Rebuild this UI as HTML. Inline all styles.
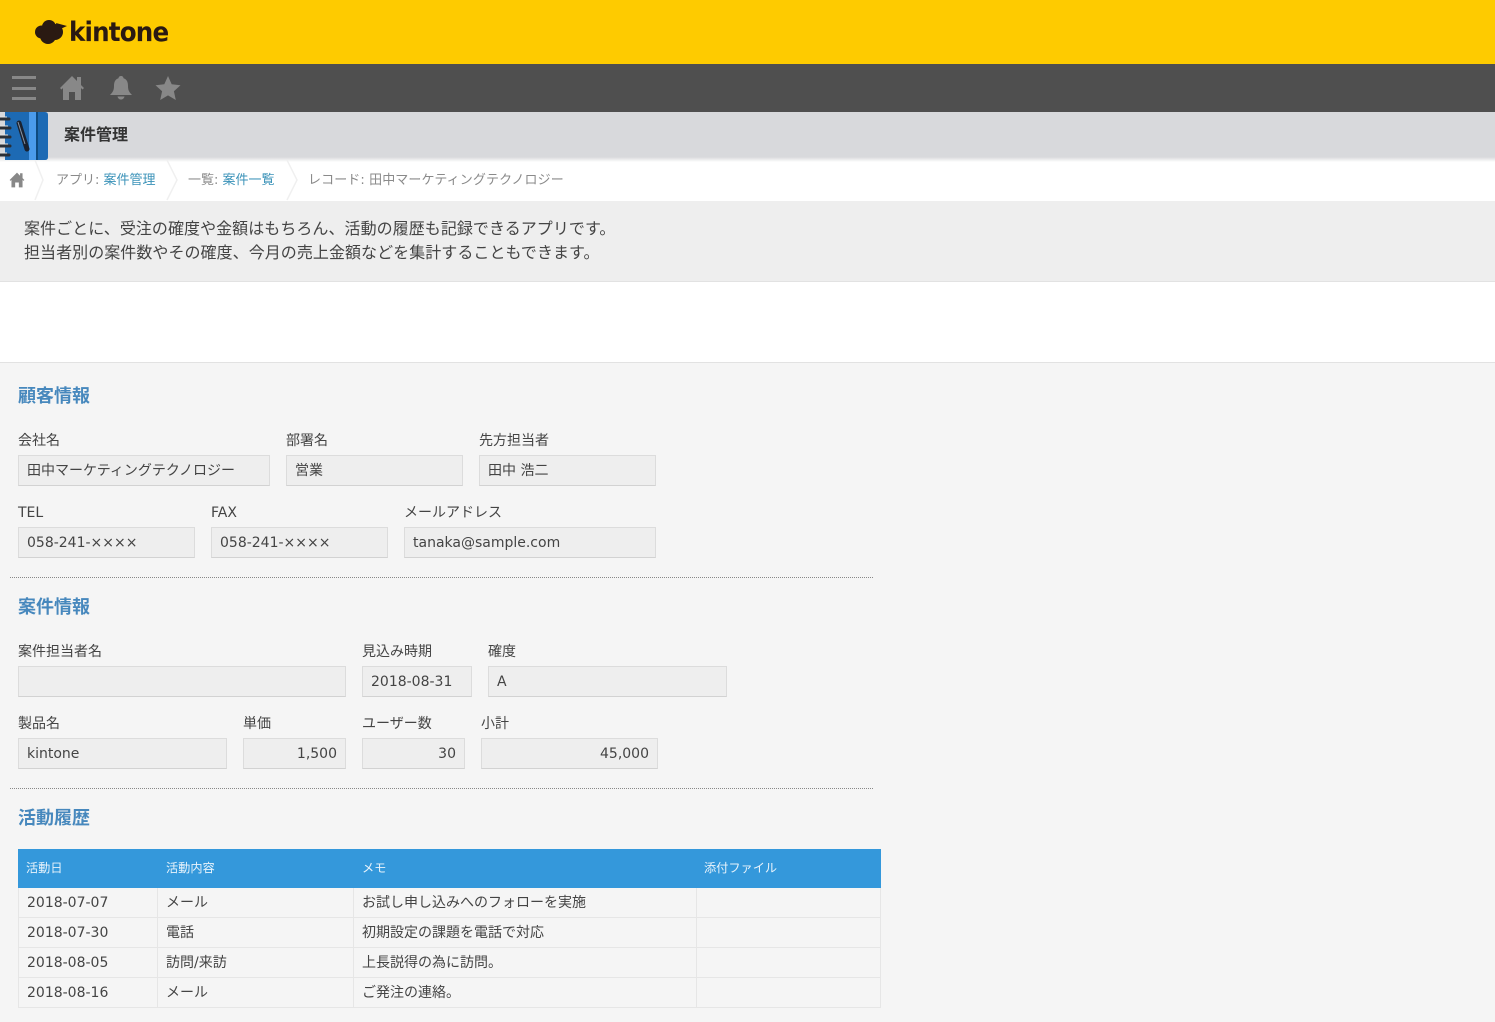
<!DOCTYPE html>
<html lang="ja">
<head>
<meta charset="utf-8">
<title>案件管理</title>
<style>
html,body{margin:0;padding:0;background:#f5f5f5}
body{width:1495px;height:1022px;position:relative;overflow:hidden;font-family:"DejaVu Sans","Noto Sans CJK JP",sans-serif;font-size:14px;color:#444}
.a{position:absolute;white-space:nowrap;line-height:20px}
.b{position:absolute;box-sizing:border-box}
.h{font-size:18px;font-weight:700;color:#4788bd;line-height:24px}
.f{position:absolute;box-sizing:border-box;height:31px;background:#eeeeee;border:1px solid #dcdcdc;border-bottom-color:#d2d2d2;padding:0 8px;line-height:30px;white-space:nowrap;color:#444}
.r{text-align:right}
.l{color:#444;font-size:14px}
.dot{position:absolute;left:10px;width:863px;height:0;border-top:1px dotted #888}
.th{position:absolute;height:39px;line-height:38px;color:#e8f3fb;font-size:12.200px;white-space:nowrap}
.hl{position:absolute;left:18px;width:863px;height:1px;background:#e6e6e6}
.vl{position:absolute;top:888px;height:120px;width:1px;background:#e6e6e6}
.bc{color:#8a8a8a;font-size:13px}
.bc span{color:#3a92b8}
</style>
</head>
<body>
<div class="b" style="left:0;top:0;width:1495px;height:64px;background:#fecb00"></div>
<svg class="b" style="left:34px;top:19px" width="34" height="26" viewBox="0 0 34 26"><g fill="#2a1a12"><circle cx="7.500" cy="13" r="6.500"/><circle cx="15" cy="8" r="7"/><circle cx="21" cy="13" r="8"/><circle cx="14" cy="17" r="8"/><path d="M22 4l11 3-9 4z"/></g></svg>
<div class="a" style="left:69px;top:17px;font:700 27px/32px 'DejaVu Sans',sans-serif;color:#2a1a12;letter-spacing:-.9px;transform-origin:0 50%;transform:scaleX(.91)">kintone</div>

<div class="b" style="left:0;top:64px;width:1495px;height:48px;background:#4f4f4f"></div>
<div class="b" style="left:12px;top:76px;width:24px;height:3px;background:#888"></div>
<div class="b" style="left:12px;top:87px;width:24px;height:3px;background:#888"></div>
<div class="b" style="left:12px;top:97px;width:24px;height:3px;background:#888"></div>
<svg class="b" style="left:59px;top:75px" width="26" height="26" viewBox="0 0 26 26"><path fill="#888" d="M1 13 13 1l5 5V2h4v8l3 3-1.500 1.500L22 13v12h-6v-8h-6v8H4V13l-1.500 1.500z"/></svg>
<svg class="b" style="left:108px;top:75px" width="26" height="26" viewBox="0 0 26 26"><path fill="#888" d="M13 1c1.500 0 2.500 1 2.500 2.300C19 4.300 20 7.500 20 11c0 4 1 6 4 9H2c3-3 4-5 4-9 0-3.500 1-6.700 4.500-7.700C10.500 2 11.500 1 13 1zM9.500 21.500h7C16 23.500 14.500 24.500 13 24.500s-3-1-3.500-3z"/></svg>
<svg class="b" style="left:155px;top:76px" width="26" height="25" viewBox="0 0 26 25"><path fill="#888" d="M13 0l3.700 8.300 8.800.9-6.600 6 1.900 8.800L13 19.400 5.200 24l1.900-8.800-6.600-6 8.800-.9z"/></svg>

<div class="b" style="left:0;top:112px;width:1495px;height:47px;background:#d8d9dc"></div>
<div class="b" style="left:0;top:157px;width:1495px;height:5px;background:linear-gradient(#d8d9dc,#fff)"></div>
<svg class="b" style="left:0;top:112px" width="48" height="48" viewBox="0 0 48 48">
<path fill="#1d6ab4" d="M5 0h40q3 0 3 3v42q0 3-3 3H5z"/>
<rect x="29" y="0" width="7" height="48" fill="#4b9bec"/>
<rect x="36" y="0" width="2" height="48" fill="#0e4a80"/>
<path fill="none" stroke="#1a2230" stroke-width="5" stroke-linecap="round" d="M19 11l8 26"/>
<path fill="none" stroke="#8a96a6" stroke-width="1" d="M18 10l7 22"/>
<g fill="none" stroke="#2a2f36" stroke-width="3" stroke-linecap="round"><path d="M0 7h9M0 16h10M0 25h10M0 34h10M0 43h9"/></g>
<g fill="none" stroke="#e2e2e2" stroke-width="1"><path d="M0 5h7M0 14h8M0 23h8M0 32h8M0 41h7"/></g>
</svg>
<div class="a" style="left:64px;top:125px;font-size:16px;font-weight:700;color:#333">案件管理</div>

<div class="b" style="left:0;top:162px;width:1495px;height:39px;background:#fff"></div>
<svg class="b" style="left:9px;top:172px" width="16" height="16" viewBox="0 0 26 26"><path fill="#888" d="M1 13 13 1l5 5V2h4v8l3 3-1.500 1.500L22 13v12h-6v-8h-6v8H4V13l-1.500 1.500z"/></svg>
<svg class="b" style="left:0;top:160px" width="320" height="41"><g fill="none" stroke="#f0f0f0" stroke-width="1.500"><path d="M35 0l8 20-8 20M167 0l10 20-10 20M287 0l10 20-10 20"/></g></svg>
<div class="a bc" style="left:56px;top:171px">アプリ: <span>案件管理</span></div>
<div class="a bc" style="left:188px;top:171px">一覧: <span>案件一覧</span></div>
<div class="a bc" style="left:308px;top:171px;letter-spacing:.1px">レコード: 田中マーケティングテクノロジー</div>

<div class="b" style="left:0;top:201px;width:1495px;height:81px;background:#eeeeee;border-bottom:1px solid #e2e2e2"></div>
<div class="a" style="left:24px;top:217px;font-size:16px;line-height:24px;color:#444;letter-spacing:.05px">案件ごとに、受注の確度や金額はもちろん、活動の履歴も記録できるアプリです。<br>担当者別の案件数やその確度、今月の売上金額などを集計することもできます。</div>
<div class="b" style="left:0;top:282px;width:1495px;height:81px;background:#fff;border-bottom:1px solid #e2e2e2"></div>

<div class="a h" style="left:18px;top:385px">顧客情報</div>
<div class="a l" style="left:18px;top:431px">会社名</div>
<div class="a l" style="left:286px;top:431px">部署名</div>
<div class="a l" style="left:479px;top:431px">先方担当者</div>
<div class="f" style="left:18px;top:455px;width:252px">田中マーケティングテクノロジー</div>
<div class="f" style="left:286px;top:455px;width:177px">営業</div>
<div class="f" style="left:479px;top:455px;width:177px">田中 浩二</div>
<div class="a l" style="left:18px;top:503px">TEL</div>
<div class="a l" style="left:211px;top:503px">FAX</div>
<div class="a l" style="left:404px;top:503px">メールアドレス</div>
<div class="f" style="left:18px;top:527px;width:177px">058-241-××××</div>
<div class="f" style="left:211px;top:527px;width:177px">058-241-××××</div>
<div class="f" style="left:404px;top:527px;width:252px">tanaka@sample.com</div>
<div class="dot" style="top:577px"></div>

<div class="a h" style="left:18px;top:596px">案件情報</div>
<div class="a l" style="left:18px;top:642px">案件担当者名</div>
<div class="a l" style="left:362px;top:642px">見込み時期</div>
<div class="a l" style="left:488px;top:642px">確度</div>
<div class="f" style="left:18px;top:666px;width:328px"></div>
<div class="f" style="left:362px;top:666px;width:110px">2018-08-31</div>
<div class="f" style="left:488px;top:666px;width:239px">A</div>
<div class="a l" style="left:18px;top:714px">製品名</div>
<div class="a l" style="left:243px;top:714px">単価</div>
<div class="a l" style="left:362px;top:714px">ユーザー数</div>
<div class="a l" style="left:481px;top:714px">小計</div>
<div class="f" style="left:18px;top:738px;width:209px">kintone</div>
<div class="f r" style="left:243px;top:738px;width:103px">1,500</div>
<div class="f r" style="left:362px;top:738px;width:103px">30</div>
<div class="f r" style="left:481px;top:738px;width:177px">45,000</div>
<div class="dot" style="top:788px"></div>

<div class="a h" style="left:18px;top:807px">活動履歴</div>
<div class="b" style="left:18px;top:849px;width:863px;height:39px;background:#3498db"></div>
<div class="th" style="left:26px;top:849px">活動日</div>
<div class="th" style="left:166px;top:849px">活動内容</div>
<div class="th" style="left:362px;top:849px">メモ</div>
<div class="th" style="left:704px;top:849px">添付ファイル</div>
<div class="hl" style="top:917px"></div>
<div class="hl" style="top:947px"></div>
<div class="hl" style="top:977px"></div>
<div class="hl" style="top:1007px"></div>
<div class="vl" style="left:18px"></div>
<div class="vl" style="left:157px"></div>
<div class="vl" style="left:353px"></div>
<div class="vl" style="left:696px"></div>
<div class="vl" style="left:880px"></div>
<div class="a" style="left:27px;top:893px">2018-07-07</div>
<div class="a" style="left:166px;top:893px">メール</div>
<div class="a" style="left:362px;top:893px">お試し申し込みへのフォローを実施</div>
<div class="a" style="left:27px;top:923px">2018-07-30</div>
<div class="a" style="left:166px;top:923px">電話</div>
<div class="a" style="left:362px;top:923px">初期設定の課題を電話で対応</div>
<div class="a" style="left:27px;top:953px">2018-08-05</div>
<div class="a" style="left:166px;top:953px">訪問/来訪</div>
<div class="a" style="left:362px;top:953px">上長説得の為に訪問。</div>
<div class="a" style="left:27px;top:983px">2018-08-16</div>
<div class="a" style="left:166px;top:983px">メール</div>
<div class="a" style="left:362px;top:983px">ご発注の連絡。</div>
</body>
</html>
